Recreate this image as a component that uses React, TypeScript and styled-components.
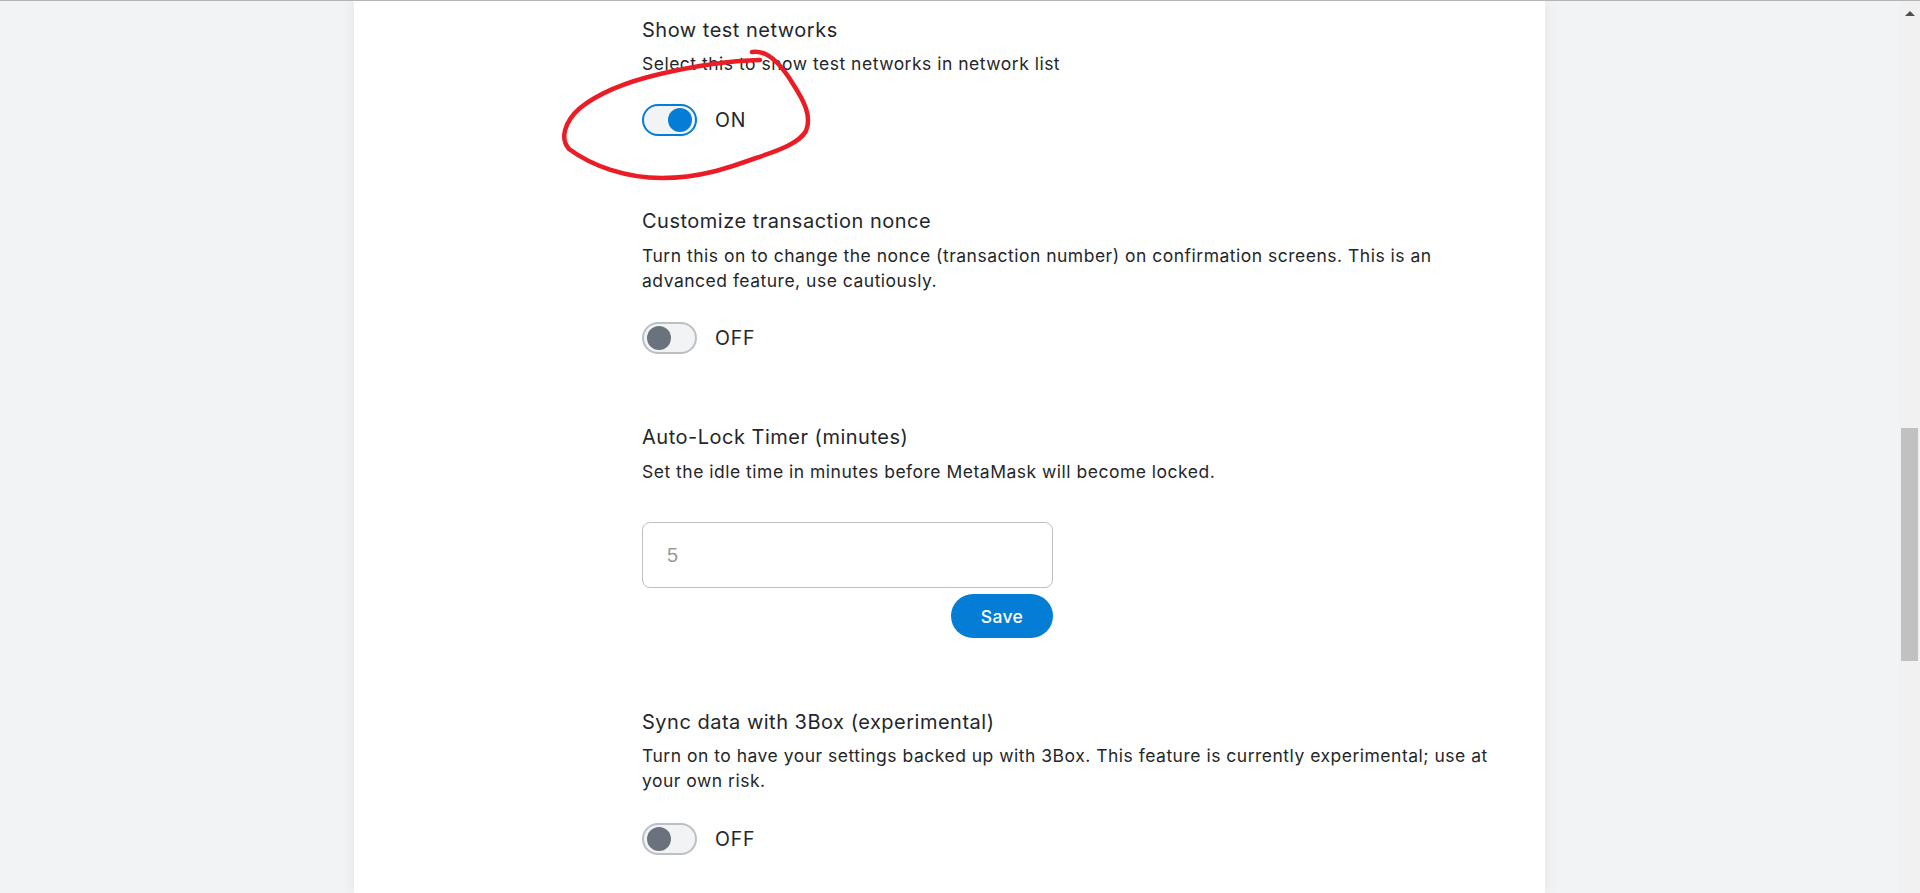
import React from 'react';
import styled, { createGlobalStyle } from 'styled-components';

const GlobalStyle = createGlobalStyle`
  html, body {
    margin: 0;
    padding: 0;
    height: 100%;
    overflow: hidden;
  }

  body {
    font-family: 'Inter', 'Liberation Sans', sans-serif;
    color: #24272a;
  }
`;

const Window = styled.div`
  position: relative;
  width: 1920px;
  height: 893px;
  display: flex;
  flex-direction: column;
  overflow: hidden;
`;

const TopEdge = styled.div`
  height: 1px;
  flex-shrink: 0;
  background: #b4b4b4;
`;

const Viewport = styled.div`
  flex: 1;
  display: flex;
  min-height: 0;
`;

const Main = styled.main`
  flex: 1;
  display: flex;
  justify-content: center;
  background: #f2f3f4;
  overflow: hidden;
`;

const Card = styled.div`
  width: 1191px;
  flex-shrink: 0;
  background: #ffffff;
  box-shadow: 0 0 14px rgba(0, 0, 0, 0.07);
  padding: 17px 0 0 288px;
  box-sizing: border-box;
`;

const Content = styled.div`
  width: 872px;
  display: flex;
  flex-direction: column;
`;

const Row = styled.section<{ $after?: number }>`
  display: flex;
  flex-direction: column;
  padding-bottom: ${(p) => p.$after ?? 71}px;
`;

const Label = styled.div<{ $gap?: number }>`
  font-size: 20px;
  line-height: 25px;
  letter-spacing: 0.5px;
  margin-bottom: ${(p) => p.$gap ?? 9}px;
`;

const Description = styled.div<{ $gap?: number }>`
  font-size: 17.5px;
  line-height: 25px;
  letter-spacing: 0.5px;
  margin-bottom: ${(p) => p.$gap ?? 28}px;
`;

const ToggleRow = styled.div`
  display: flex;
  align-items: center;
  gap: 18px;
`;

const Track = styled.div<{ $on: boolean }>`
  width: 55px;
  height: 32px;
  box-sizing: border-box;
  border-radius: 16px;
  border: 2px solid ${(p) => (p.$on ? '#037dd6' : '#bbc0c5')};
  background: #f2f3f4;
  display: flex;
  align-items: center;
  justify-content: ${(p) => (p.$on ? 'flex-end' : 'flex-start')};
  padding: 0 3px;
`;

const Knob = styled.div<{ $on: boolean }>`
  width: 24px;
  height: 24px;
  border-radius: 50%;
  background: ${(p) => (p.$on ? '#037dd6' : '#6a737d')};
`;

const ToggleText = styled.span`
  font-size: 19.5px;
  letter-spacing: 0.8px;
  color: #24272a;
`;

const TimerBlock = styled.div`
  width: 411px;
  display: flex;
  flex-direction: column;
  align-items: flex-end;
  gap: 6px;
`;

const TimerInput = styled.input`
  width: 100%;
  height: 66px;
  box-sizing: border-box;
  border: 1px solid #bbc0c5;
  border-radius: 8px;
  padding: 0 0 0 24px;
  font-family: 'Liberation Sans', Arial, sans-serif;
  font-size: 20px;
  color: #9b9b9b;
  background: #ffffff;
  outline: none;
`;

const SaveButton = styled.button`
  width: 102px;
  height: 44px;
  border: none;
  border-radius: 22px;
  background: #037dd6;
  color: #ffffff;
  font-family: 'Inter', 'Liberation Sans', sans-serif;
  font-size: 17.5px;
  font-weight: 500;
  letter-spacing: 0.4px;
  cursor: pointer;
`;

const Scrollbar = styled.div`
  width: 21px;
  flex-shrink: 0;
  background: #f1f1f1;
  display: flex;
  flex-direction: column;
  align-items: center;
`;

const ArrowUp = styled.div`
  width: 0;
  height: 0;
  margin-top: 10px;
  border-left: 5px solid transparent;
  border-right: 5px solid transparent;
  border-bottom: 5px solid #505050;
`;

const Thumb = styled.div`
  width: 17px;
  height: 233px;
  margin-top: 412px;
  background: #c1c1c1;
`;

const Scribble = styled.svg`
  position: absolute;
  left: 0;
  top: 0;
  pointer-events: none;
`;

const Toggle = ({ on }: { on: boolean }) => (
  <ToggleRow>
    <Track $on={on}>
      <Knob $on={on} />
    </Track>
    <ToggleText>{on ? 'ON' : 'OFF'}</ToggleText>
  </ToggleRow>
);

const App = () => {
  return (
    <>
      <GlobalStyle />
      <Window>
        <TopEdge />
        <Viewport>
          <Main>
            <Card>
              <Content>
                <Row $after={73}>
                  <Label $gap={8}>Show test networks</Label>
                  <Description $gap={28}>Select this to show test networks in network list</Description>
                  <Toggle on />
                </Row>

                <Row>
                  <Label>Customize transaction nonce</Label>
                  <Description $gap={29}>
                    Turn this on to change the nonce (transaction number) on confirmation screens. This is
                    an advanced feature, use cautiously.
                  </Description>
                  <Toggle on={false} />
                </Row>

                <Row $after={72}>
                  <Label>Auto-Lock Timer (minutes)</Label>
                  <Description $gap={38}>
                    Set the idle time in minutes before MetaMask will become locked.
                  </Description>
                  <TimerBlock>
                    <TimerInput type="number" defaultValue="5" />
                    <SaveButton>Save</SaveButton>
                  </TimerBlock>
                </Row>

                <Row>
                  <Label $gap={8}>Sync data with 3Box (experimental)</Label>
                  <Description $gap={30}>
                    Turn on to have your settings backed up with 3Box. This feature is currently
                    experimental; use at your own risk.
                  </Description>
                  <Toggle on={false} />
                </Row>
              </Content>
            </Card>
          </Main>
          <Scrollbar>
            <ArrowUp />
            <Thumb />
          </Scrollbar>
        </Viewport>

        {/* red hand-drawn circle around the first toggle */}
        <Scribble width="1920" height="893" viewBox="0 0 1920 893">
          <path
            d="M 752 52 C 768 49, 782 66, 793 84 C 804 101, 812 116, 806 131 C 799 143, 780 150, 756 158 C 728 168, 700 178, 662 178 C 626 178, 592 166, 569 149 C 560 139, 564 122, 580 108 C 600 92, 630 81, 660 74 C 690 67, 724 61, 760 60"
            fill="none"
            stroke="#ec1c24"
            strokeWidth="4.5"
            strokeLinecap="round"
            strokeLinejoin="round"
          />
        </Scribble>
      </Window>
    </>
  );
};

export default App;
